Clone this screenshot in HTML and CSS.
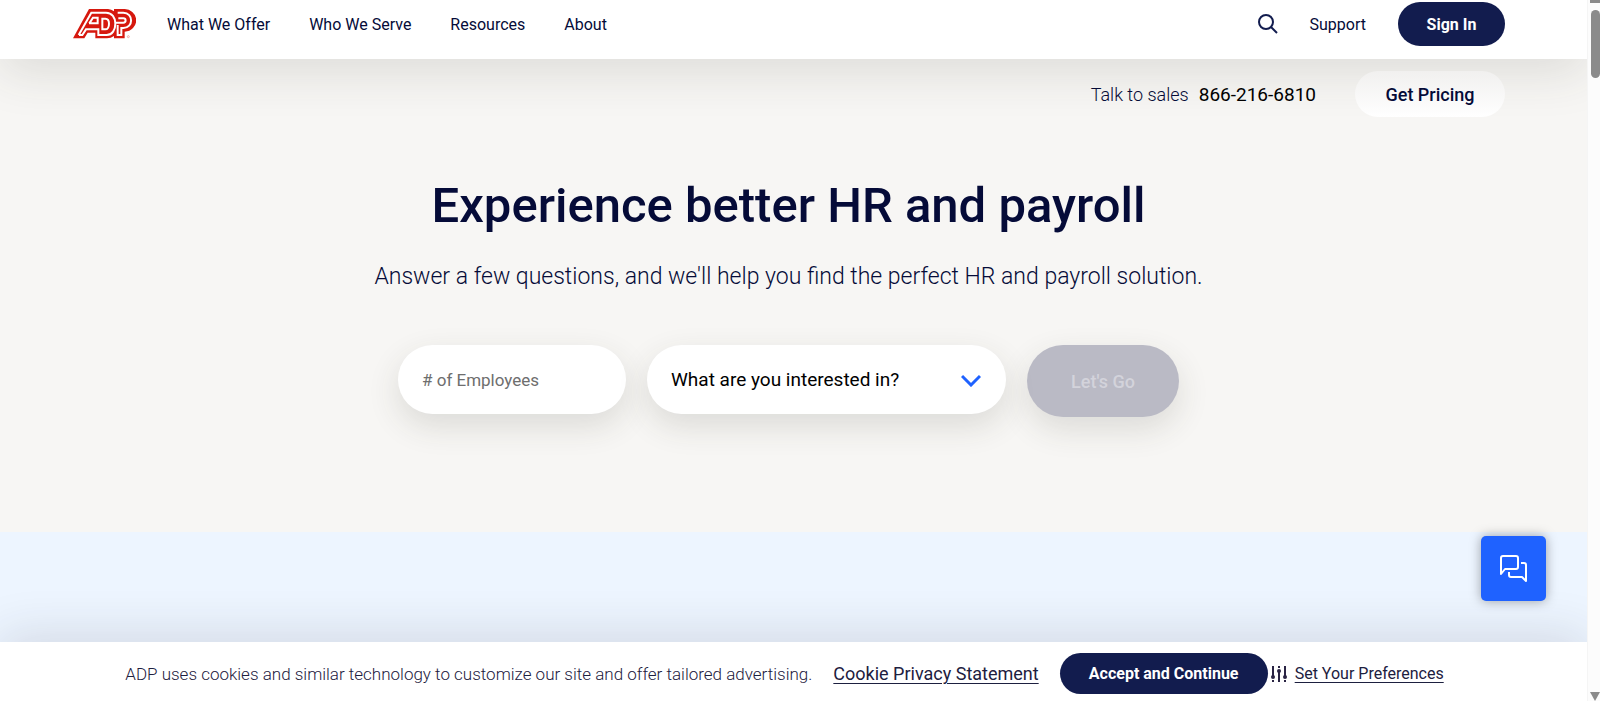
FILE: index.html
```
<!DOCTYPE html>
<html lang="en">
<head>
  <meta charset="UTF-8">
  <meta name="viewport" content="width=device-width, initial-scale=1.0">
  <title>ADP | HR and Payroll</title>
  <link rel="stylesheet" href="styles.css">
</head>
<body>
  <div class="page">
    <header class="header">
      <div class="container header-row">
        <a href="#" class="logo" aria-label="ADP">
          <svg viewBox="0 0 189 90" width="63" height="30">
            <path fill="#d6180e" d="M0 88 L48 0 H105 Q115 1 123 7 V0 H152 A35 33 0 0 1 155 68 V88 H123 V81 Q114 88 102 88 H67 V71 H44 L34 88 Z"/>
            <g fill="none" stroke="#fff" stroke-width="6">
              <path d="M18 78 H28 L39 61 H76 V78 H101 C118 78 127 62 127 44 C127 26 117 11 99 11 H55 L17 78"/>
              <path d="M49 43 L60 26 H74 V43 H48"/>
              <path d="M88 29 V61 H97 C104 61 108 53 108 44 C108 35 104 29 97 29 H85"/>
              <path d="M134 11 H151 C182 12 182 57 151 57 H145 V78 H134 V48"/>
              <path d="M136 28 H151 C160 28 160 41 151 41 H127"/>
            </g>
            <circle cx="166" cy="83" r="3" fill="none" stroke="#e58a84" stroke-width="2"/>
          </svg>
        </a>
        <nav class="nav">
          <a href="#">What We Offer</a>
          <a href="#">Who We Serve</a>
          <a href="#">Resources</a>
          <a href="#">About</a>
        </nav>
        <div class="header-tools">
          <button type="button" class="icon-btn" aria-label="Search">
            <svg viewBox="0 0 20 20" width="20" height="20" fill="none" stroke="#121c4e" stroke-width="2">
              <circle cx="8" cy="8" r="7"/>
              <path d="M13 13 L19 19"/>
            </svg>
          </button>
          <a href="#" class="support">Support</a>
          <button type="button" class="btn btn-signin">Sign In</button>
        </div>
      </div>
    </header>

    <main>
      <section class="hero">
        <div class="container sales">
          <span>Talk to sales</span>
          <a href="#" class="phone">866-216-6810</a>
          <button type="button" class="btn btn-pricing">Get Pricing</button>
        </div>
        <h1>Experience better HR and payroll</h1>
        <p class="lead">Answer a few questions, and we'll help you find the perfect HR and payroll solution.</p>
        <form class="finder">
          <input type="text" class="field" placeholder="# of Employees" aria-label="Number of employees">
          <div class="select-wrap">
            <select class="field" aria-label="What are you interested in?">
              <option>What are you interested in?</option>
            </select>
            <svg class="chevron" viewBox="0 0 20 13" width="20" height="13" fill="none" stroke="#1f62ff" stroke-width="3">
              <path d="M1 2 L10 11 L19 2"/>
            </svg>
          </div>
          <button type="submit" class="btn btn-go" disabled>Let's Go</button>
        </form>
      </section>
      <section class="band"></section>
    </main>

    <button type="button" class="chat" aria-label="Chat">
      <svg viewBox="0 0 28 28" width="28" height="28" fill="none" stroke="#fff" stroke-width="2" stroke-linejoin="round">
        <path d="M1 19 V3 Q1 1 3 1 H16 Q18 1 18 3 V12 Q18 14 16 14 H5 Z"/>
        <path d="M21 8 H24 Q26 8 26 10 V26 L22 22 H11 Q9 22 9 20 V17"/>
      </svg>
    </button>

    <div class="cookie-bar">
      <p>ADP uses cookies and similar technology to customize our site and offer tailored advertising.</p>
      <a href="#" class="cookie-link">Cookie Privacy Statement</a>
      <div class="cookie-actions">
        <button type="button" class="btn btn-accept">Accept and Continue</button>
        <svg viewBox="0 0 18 18" width="18" height="18" fill="none" stroke="#2a2444" stroke-width="2">
          <path d="M3 1 V11 M3 15 V17 M9 1 V3 M9 7 V17 M15 1 V11 M15 15 V17"/>
          <g fill="#2a2444" stroke="none">
            <circle cx="3" cy="12" r="2"/>
            <circle cx="9" cy="6" r="2"/>
            <circle cx="15" cy="12" r="2"/>
          </g>
        </svg>
        <a href="#" class="prefs">Set Your Preferences</a>
      </div>
    </div>
  </div>

  <div class="scrollbar">
    <div class="scroll-edge"></div>
    <div class="scroll-thumb"></div>
    <div class="scroll-arrow"></div>
  </div>
</body>
</html>
```
FILE: styles.css
```
* {
  box-sizing: border-box;
}
body {
  margin: 0;
  display: flex;
  min-height: 100vh;
  font-family: Roboto, "Noto Sans", sans-serif;
  font-size: 16px;
  color: #050b38;
  background: #fcfcfc;
}
a {
  color: inherit;
  text-decoration: none;
}
button {
  font-family: inherit;
  border: none;
  cursor: pointer;
}
.page {
  flex: 1;
  min-width: 0;
  display: flex;
  flex-direction: column;
  overflow: hidden;
}
.container {
  width: 100%;
  padding: 0 82px 0 73px;
}
.btn {
  border-radius: 36px;
  font-size: 16px;
  font-weight: 700;
  color: #fff;
  background: #121c4e;
}

/* header */
.header {
  position: relative;
  z-index: 2;
  height: 59px;
  background: #fff;
  box-shadow: 0 12px 50px rgba(60, 55, 40, 0.14);
}
.header-row {
  display: flex;
  align-items: center;
  height: 48px;
}
.logo {
  display: flex;
  margin-right: 31px;
}
.nav {
  display: flex;
  gap: 39px;
}
.header-tools {
  display: flex;
  align-items: center;
  margin-left: auto;
}
.icon-btn {
  display: flex;
  padding: 0;
  background: none;
}
.support {
  margin: 0 32px;
}
.btn-signin {
  width: 107px;
  height: 44px;
}

/* hero */
.hero {
  display: flex;
  flex-direction: column;
  align-items: center;
  height: 473px;
  background: #f7f6f4;
}
.sales {
  display: flex;
  align-items: center;
  justify-content: flex-end;
  padding-top: 12px;
  font-size: 18px;
}
.sales span {
  font-weight: 300;
}
.phone {
  margin: 0 39px 0 10px;
  font-size: 19px;
  color: #000;
}
.btn-pricing {
  position: relative;
  z-index: 3;
  width: 150px;
  height: 46px;
  font-size: 18px;
  font-weight: 500;
  color: #050b38;
  background: linear-gradient(#f1f0ef, #fff);
}
h1 {
  margin: 59px 10px 0 0;
  font-size: 49px;
  font-weight: 500;
  line-height: 60px;
}
.lead {
  margin: 24px 10px 0 0;
  font-size: 23px;
  font-weight: 300;
  line-height: 34px;
}
.finder {
  display: flex;
  align-items: flex-start;
  gap: 21px;
  margin: 51px 10px 0 0;
}
.field {
  width: 228px;
  height: 69px;
  padding: 0 24px;
  border: none;
  border-radius: 36px;
  background: #fff;
  box-shadow: 0 12px 32px rgba(60, 55, 40, 0.14);
  font-family: inherit;
  font-size: 17px;
  color: #000;
}
.field::placeholder {
  color: #6e6e6e;
}
.select-wrap {
  position: relative;
}
select.field {
  width: 359px;
  font-size: 19px;
  appearance: none;
}
.chevron {
  position: absolute;
  top: 29px;
  right: 25px;
  pointer-events: none;
}
.btn-go {
  width: 152px;
  height: 72px;
  font-size: 18px;
  font-weight: 500;
  color: #d3d3db;
  background: #babac5;
  box-shadow: 0 12px 32px rgba(60, 55, 40, 0.14);
}

main {
  flex: 1;
  display: flex;
  flex-direction: column;
}
.band {
  flex: 1;
  background: #edf5ff;
}

.chat {
  position: fixed;
  right: 54px;
  bottom: 100px;
  z-index: 4;
  display: flex;
  align-items: center;
  justify-content: center;
  width: 65px;
  height: 65px;
  border-radius: 5px;
  background: #1f62ff;
  box-shadow: 0 0 12px rgba(0, 0, 0, 0.35);
}

/* cookie notice */
.cookie-bar {
  position: relative;
  z-index: 2;
  display: flex;
  align-items: center;
  justify-content: center;
  gap: 21px;
  height: 59px;
  padding: 4px 18px 0 0;
  background: #fff;
  box-shadow: 0 -6px 50px rgba(40, 40, 60, 0.14);
  font-size: 17px;
  color: #1d2040;
}
.cookie-bar p {
  margin: 0;
  font-weight: 300;
}
.cookie-link,
.prefs {
  text-decoration: underline;
  text-underline-offset: 3px;
}
.cookie-link {
  font-size: 18px;
}
.cookie-actions {
  display: flex;
  align-items: center;
}
.btn-accept {
  width: 208px;
  height: 41px;
  margin-right: 2px;
}
.prefs {
  margin-left: 7px;
  font-size: 16px;
}

/* scrollbar */
.scrollbar {
  display: flex;
  flex-direction: column;
  align-items: flex-end;
  width: 13px;
  border-left: 1px solid #f5f5f5;
}
.scroll-edge {
  width: 10px;
  height: 3px;
  background: #8b8b8b;
}
.scroll-thumb {
  width: 9px;
  height: 68px;
  margin-top: 7px;
  border-radius: 5px;
  background: #8b8b8b;
}
.scroll-arrow {
  width: 10px;
  height: 9px;
  margin-top: auto;
  background: #8b8b8b;
  clip-path: polygon(0 0, 100% 0, 50% 100%);
}
```
